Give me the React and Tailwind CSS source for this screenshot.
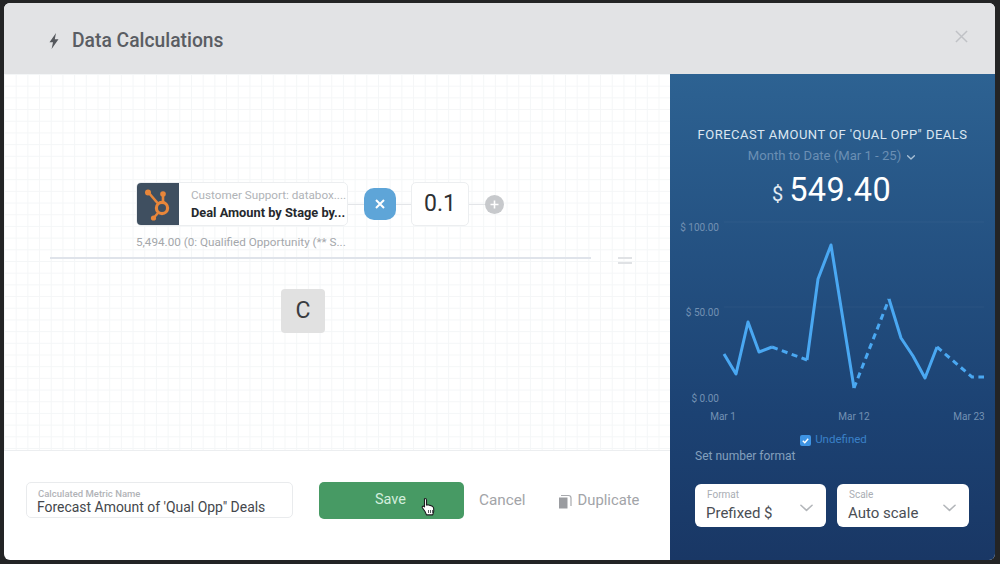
import React from "react";

const Chevron = ({ className, sw = 1.7 }) => (
  <svg viewBox="0 0 14 8" className={className} fill="none" stroke="currentColor" strokeWidth={sw} strokeLinecap="round" strokeLinejoin="round">
    <path d="M1 1l6 5.5L13 1" />
  </svg>
);

const Hubspot = () => (
  <svg viewBox="0 0 42 44" className="w-[42px] h-[44px]" fill="none" stroke="#e8863a">
    <circle cx="25" cy="26" r="5.6" strokeWidth="3.2" />
    <path d="M11.5 10.5L20.5 21" strokeWidth="2.6" />
    <path d="M26 12v8" strokeWidth="2.6" />
    <path d="M21 31l-4 4.5" strokeWidth="2.4" />
    <circle cx="11" cy="10.5" r="3" fill="#e8863a" stroke="none" />
    <circle cx="26" cy="12" r="2.8" fill="#e8863a" stroke="none" />
    <circle cx="16.5" cy="36" r="2.6" fill="#e8863a" stroke="none" />
  </svg>
);

const Connector = ({ w }) => <div className={`h-px bg-[#e3e5e8] ${w}`} />;

const SelectBox = ({ label, value, width }) => (
  <div className={`${width} h-[43px] bg-white rounded-md pl-[12px] pr-[13px] flex items-start justify-between`}>
    <div className="flex flex-col">
      <span className="text-[10px] leading-[12px] mt-[5px] text-[#a9adb3]">{label}</span>
      <span className="text-[15px] leading-[20px] mt-[2px] -ml-[1px] text-[#4a4e54] whitespace-nowrap">{value}</span>
    </div>
    <Chevron className="w-[13px] h-[8px] mt-[20px] text-[#b3b6ba]" />
  </div>
);

const solid = [
  "54,135 66,155 78,103 89,133 102,128",
  "137,141 148,60 161,26 184,169",
  "219,80 231,119 243,137 255,159 267,128",
];
const dashed = ["102,128 137,141", "184,169 219,80", "267,128 302,158 314,158"];

function Chart() {
  return (
    <svg viewBox="0 0 325 207" className="w-[325px] h-[207px] block">
      <path d="M54 88H314M54 3H314" stroke="#ffffff" strokeOpacity="0.04" />
      {solid.map((p) => (
        <polyline key={p} points={p} fill="none" stroke="#4aa8f2" strokeWidth="3" strokeLinejoin="round" />
      ))}
      {dashed.map((p) => (
        <polyline key={p} points={p} fill="none" stroke="#4aa8f2" strokeWidth="3" strokeDasharray="6 4.5" />
      ))}
      <g fill="#7391b3" fontSize="10" fontFamily="Roboto, sans-serif" textAnchor="end">
        <text x="49" y="11.5">$ 100.00</text>
        <text x="49" y="97">$ 50.00</text>
        <text x="49" y="183">$ 0.00</text>
      </g>
      <g fill="#7391b3" fontSize="10" fontFamily="Roboto, sans-serif" textAnchor="middle">
        <text x="53" y="201">Mar 1</text>
        <text x="184" y="201">Mar 12</text>
        <text x="299" y="201">Mar 23</text>
      </g>
    </svg>
  );
}

export default function App() {
  return (
    <div className="w-[1000px] h-[564px] bg-[#232425] pt-[3px] pl-[4px] pr-[5px] pb-[4px] overflow-hidden font-['Roboto',sans-serif]">
      <div className="h-[557px] rounded-[6px] overflow-hidden flex flex-col bg-white">
        <header className="h-[71px] shrink-0 bg-[#e2e3e5] flex items-center pl-[45px] pr-[27px] pt-[5px]">
          <svg viewBox="0 0 10 16" className="w-[10px] h-[16px] text-[#55585d]" fill="currentColor">
            <path d="M7 0L0.5 9.2H4L2.6 16 9.5 6.2H5.8z" />
          </svg>
          <h1 className="ml-[13px] text-[19.3px] font-medium text-[#5a5d63] leading-none">Data Calculations</h1>
          <svg viewBox="0 0 14 14" className="ml-auto -mt-[10px] w-[13px] h-[13px] text-[#c0c2c6]" fill="none" stroke="currentColor" strokeWidth="1.6">
            <path d="M1 1l12 12M13 1L1 13" />
          </svg>
        </header>

        <div className="flex-1 flex min-h-0">
          <section className="w-[666px] flex flex-col">
            <div className="h-[377px] shrink-0 border-b border-[#eceef0] bg-white bg-[linear-gradient(#f4f6f7_1px,transparent_1px),linear-gradient(90deg,#f4f6f7_1px,transparent_1px)] bg-[size:11.7px_11.7px] pl-[46px] pt-[108px]">
              <div className="ml-[86px] flex items-center h-[44px]">
                <div className="flex h-[44px] w-[212px] rounded-[5px] bg-white border border-[#eceef0] overflow-hidden">
                  <div className="w-[42px] h-full bg-[#3f4f60] shrink-0 flex items-center justify-center">
                    <Hubspot />
                  </div>
                  <div className="pl-[12px] pt-[4px] flex flex-col min-w-0">
                    <span className="text-[11.7px] leading-[16px] text-[#b0b3b7] whitespace-nowrap">Customer Support: databox....</span>
                    <span className="text-[12.8px] leading-[20px] font-bold text-[#26292d] whitespace-nowrap">Deal Amount by Stage by...</span>
                  </div>
                </div>
                <Connector w="w-[16px]" />
                <div className="w-[32px] h-[32px] rounded-[10px] bg-[#5ea5d8] flex items-center justify-center">
                  <svg viewBox="0 0 10 10" className="w-[10px] h-[10px]" fill="none" stroke="#fff" strokeWidth="2">
                    <path d="M1 1l8 8M9 1L1 9" />
                  </svg>
                </div>
                <Connector w="w-[15px]" />
                <div className="w-[58px] h-[44px] rounded-[5px] bg-white border border-[#eceef0] flex items-center justify-center text-[23px] text-[#2d3034]">0.1</div>
                <Connector w="w-[16px]" />
                <div className="w-[19px] h-[19px] rounded-full bg-[#c7c9cc] flex items-center justify-center text-white">
                  <svg viewBox="0 0 9 9" className="w-[9px] h-[9px]" fill="none" stroke="currentColor" strokeWidth="1.6">
                    <path d="M4.5 0.5v8M0.5 4.5h8" />
                  </svg>
                </div>
              </div>
              <p className="ml-[86px] mt-[9px] text-[11.7px] leading-[14px] text-[#a4a7ab] whitespace-nowrap">5,494.00 (0: Qualified Opportunity (** S...</p>
              <div className="flex items-center mt-[8px] h-[2px]">
                <div className="w-[541px] h-[2px] bg-[#dfe3ea]" />
                <div className="ml-[27px] mt-[5px] w-[14px] h-[7px] border-y-2 border-[#e0e2e5]" />
              </div>
              <div className="ml-[231px] mt-[30px] w-[44px] h-[44px] rounded-[4px] bg-[#e1e1e1] flex items-center justify-center text-[23px] text-[#3a3c40]">C</div>
            </div>

            <footer className="flex-1 flex items-center pl-[22px] pb-[11px]">
              <div className="w-[267px] h-[36px] rounded-[5px] border border-[#e9ebed] pl-[10px] flex flex-col">
                <span className="text-[9.5px] leading-[11px] mt-[5px] ml-[1px] font-medium text-[#b1b3b7]">Calculated Metric Name</span>
                <span className="text-[13.95px] leading-[16px] text-[#44474c] whitespace-nowrap">Forecast Amount of 'Qual Opp" Deals</span>
              </div>
              <div className="relative ml-[26px] w-[145px] h-[37px] rounded-[5px] bg-[#479a64] flex items-center justify-center text-[14.5px] text-[#d3eedd]">
                <span className="-ml-[2px]">Save</span>
                <svg viewBox="0 0 16 20" className="absolute left-[102px] top-[15px] w-[16px] h-[20px]">
                  <path d="M4 1.5c1 0 1.5.7 1.5 1.6v5l1-.4 1.3.3 1.2.4 1.3.4 1.4.8c.8.5 1 1.3 1 2.2v2.7l-1 3.4H5.5L4 14.5 1.5 11c-.5-.8-.3-1.5.3-1.8.6-.3 1.2 0 1.7.7V3c0-.9-.3-1.5.5-1.5z" fill="#fff" stroke="#1b1d1f" strokeWidth="1.1" strokeLinejoin="round" />
                  <path d="M7.5 13v3M9.5 13v3M11.5 13v3" stroke="#5a5d60" strokeWidth="1" />
                </svg>
              </div>
              <span className="ml-[15px] text-[15.3px] text-[#a2a4a8]">Cancel</span>
              <div className="ml-[32px] mt-[1px] flex items-center text-[#a2a4a8]">
                <svg viewBox="0 0 14 16" className="w-[14px] h-[16px] mt-[1px]" fill="none">
                  <path d="M1 4.5h8.5V15.5H1z" fill="#9a9ca0" />
                  <path d="M3 2.5h7.5c1.5 0 2.5 1 2.5 2.5v8" stroke="#a8aaae" strokeWidth="1.2" />
                </svg>
                <span className="ml-[6px] text-[14.8px]">Duplicate</span>
              </div>
            </footer>
          </section>

          <aside className="flex-1 bg-[linear-gradient(180deg,#2d6292_0%,#1c4273_70%,#193765_100%)] flex flex-col">
            <h2 className="mt-[53px] text-center text-[13px] leading-[16px] tracking-[0.47px] text-[#dce7f1] whitespace-nowrap">FORECAST AMOUNT OF 'QUAL OPP" DEALS</h2>
            <div className="mt-[5px] flex items-center justify-center text-[#6b8fb4] text-[13.1px] leading-[16px] -ml-[2px]">
              <span>Month to Date (Mar 1 - 25)</span>
              <Chevron sw={2.4} className="ml-[6px] w-[8px] h-[5px] mt-[2px] text-[#a9c0d6]" />
            </div>
            <div className="mt-[7px] h-[38px] flex items-baseline justify-center text-white -ml-[2px]">
              <span className="text-[20px] mr-[6px] text-[#e3ebf3]">$</span>
              <span className="text-[32.5px] leading-[38px] tracking-[0.3px]">549.40</span>
            </div>
            <div className="mt-[10px]">
              <Chart />
            </div>
            <div className="mt-[7px] h-[14px] flex items-center justify-center pl-[2px]">
              <span className="w-[11px] h-[11px] rounded-[2px] bg-[#3e94e4] flex items-center justify-center">
                <svg viewBox="0 0 10 10" className="w-[9px] h-[9px]" fill="none" stroke="#fff" strokeWidth="1.6">
                  <path d="M2 5.2l2.2 2.2L8 3" />
                </svg>
              </span>
              <span className="ml-[4px] text-[11.5px] text-[#3a80c8]">Undefined</span>
            </div>
            <p className="mt-[2px] ml-[25px] text-[12px] leading-[14px] text-[#84a0bd]">Set number format</p>
            <div className="mt-[21px] ml-[25px] flex gap-[11px]">
              <SelectBox label="Format" value="Prefixed $" width="w-[131px]" />
              <SelectBox label="Scale" value="Auto scale" width="w-[132px]" />
            </div>
          </aside>
        </div>
      </div>
    </div>
  );
}
